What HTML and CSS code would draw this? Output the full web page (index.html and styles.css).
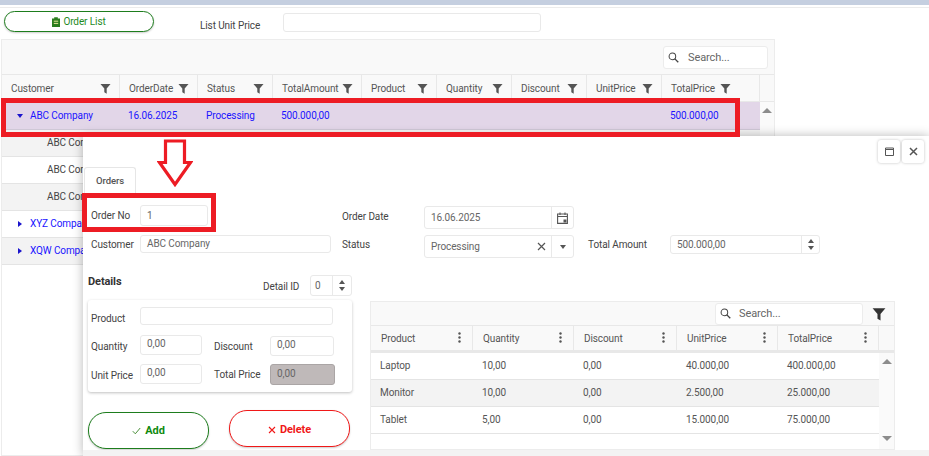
FILE: index.html
```html
<!DOCTYPE html>
<html lang="en">
<head>
<meta charset="utf-8">
<title>Orders</title>
<link rel="stylesheet" href="styles.css">
</head>
<body>
<svg class="defs" width="0" height="0" aria-hidden="true">
  <symbol id="funnel" viewBox="0 0 12 12"><path d="M.5 1h11L7.3 6v5.600L4.700 10V6z"/></symbol>
  <symbol id="lens" viewBox="0 0 12 12"><circle cx="4.800" cy="4.800" r="3.600" fill="none" stroke="currentColor" stroke-width="1.100"/><path d="M7.500 7.500l3.700 3.700" stroke="currentColor" stroke-width="1.500" fill="none"/></symbol>
  <symbol id="dots" viewBox="0 0 3 11"><circle cx="1.500" cy="1.500" r="1.200"/><circle cx="1.500" cy="5.500" r="1.200"/><circle cx="1.500" cy="9.500" r="1.200"/></symbol>
</svg>
<div class="topstrip"></div>
<div class="toolbar">
  <button class="btn-list"><svg class="clip" viewBox="0 0 8 10" width="8" height="10"><path d="M0 1.500h2.200V.3h3.600v1.200H8V10H0z" fill="#2b7d1e"/><path d="M1.800 4.200h4.400M1.800 6.400h4.400" stroke="#e8e59a" stroke-width="1"/></svg>Order List</button>
  <span class="list-label">List Unit Price</span>
  <div class="field list-input"></div>
</div>
<section class="grid">
  <div class="grid-tools">
    <div class="search main-search"><svg class="lens"><use href="#lens"/></svg><span>Search...</span></div>
  </div>
  <div class="grid-head cols">
    <div class="hc"><span>Customer</span><svg class="fn"><use href="#funnel"/></svg></div>
    <div class="hc"><span>OrderDate</span><svg class="fn"><use href="#funnel"/></svg></div>
    <div class="hc"><span>Status</span><svg class="fn"><use href="#funnel"/></svg></div>
    <div class="hc"><span>TotalAmount</span><svg class="fn"><use href="#funnel"/></svg></div>
    <div class="hc"><span>Product</span><svg class="fn"><use href="#funnel"/></svg></div>
    <div class="hc"><span>Quantity</span><svg class="fn"><use href="#funnel"/></svg></div>
    <div class="hc"><span>Discount</span><svg class="fn"><use href="#funnel"/></svg></div>
    <div class="hc"><span>UnitPrice</span><svg class="fn"><use href="#funnel"/></svg></div>
    <div class="hc hc-last"><span>TotalPrice</span><svg class="fn"><use href="#funnel"/></svg></div>
    <div class="hc"></div>
  </div>
  <div class="grid-body">
    <div class="rows">
      <div class="row row-open">
        <div class="cell cell-cust"><i class="caret-d"></i>ABC Company</div>
        <div class="cell">16.06.2025</div><div class="cell">Processing</div><div class="cell">500.000,00</div>
        <div class="cell"></div><div class="cell"></div><div class="cell"></div><div class="cell"></div><div class="cell">500.000,00</div>
      </div>
      <div class="row row-child alt">ABC Company</div>
      <div class="row row-child">ABC Company</div>
      <div class="row row-child alt">ABC Company</div>
      <div class="row row-group"><i class="caret-r"></i>XYZ Company</div>
      <div class="row row-group alt"><i class="caret-r"></i>XQW Company</div>
    </div>
    <div class="scroll"><i class="tri-up"></i></div>
  </div>
</section>

<section class="modal">
  <div class="win-bar">
    <button class="win-btn"><svg viewBox="0 0 9 9" width="9" height="9"><path d="M.5 2.500h8v6h-8zM.5 1h8v1.500h-8z" fill="none" stroke="#555"/></svg></button>
    <button class="win-btn"><svg viewBox="0 0 9 9" width="9" height="9"><path d="M1 1l7 7M8 1L1 8" stroke="#555" stroke-width="1.500"/></svg></button>
  </div>
  <div class="tabs"><div class="tab">Orders</div></div>
  <div class="form">
    <label class="lb">Order No</label>
    <div class="field f-no">1</div>
    <label class="lb lb-date">Order Date</label>
    <div class="field f-date"><span class="grow">16.06.2025</span><span class="addon"><svg viewBox="0 0 11 12" width="11" height="12"><path d="M.6 2h9.800v9.400H.6zM.6 4.500h9.800M3 .5v2.500M8 .5v2.500" fill="none" stroke="#555" stroke-width="1.100"/><path d="M6.500 7.500h3v3h-3z" fill="#555"/></svg></span></div>
    <span></span><span></span>
    <label class="lb lb-cust">Customer</label>
    <div class="field f-cust">ABC Company</div>
    <label class="lb lb-status">Status</label>
    <div class="field f-status"><span class="grow">Processing</span><svg class="x" viewBox="0 0 9 9" width="9" height="9"><path d="M1 1l7 7M8 1L1 8" stroke="#555" stroke-width="1.200"/></svg><span class="addon"><i class="tri-down small"></i></span></div>
    <label class="lb lb-total">Total Amount</label>
    <div class="field f-total"><span class="grow">500.000,00</span><span class="spin"><i class="tri-up small"></i><i class="tri-down small"></i></span></div>
  </div>
  <div class="lower">
    <div class="left">
      <div class="det-head">
        <h3>Details</h3>
        <label class="lb det-lb">Detail ID</label>
        <div class="field f-id"><span class="grow">0</span><span class="spin"><i class="tri-up small"></i><i class="tri-down small"></i></span></div>
      </div>
      <div class="card">
        <label class="lb">Product</label>
        <div class="field f-prod"></div>
        <label class="lb">Quantity</label>
        <div class="field f-qty">0,00</div>
        <label class="lb lb2">Discount</label>
        <div class="field f-disc">0,00</div>
        <label class="lb lb-unit">Unit Price</label>
        <div class="field f-unit">0,00</div>
        <label class="lb lb2">Total Price</label>
        <div class="field f-off">0,00</div>
      </div>
      <div class="actions">
        <button class="act act-add"><svg viewBox="0 0 9 8" width="9" height="8"><path d="M.8 4.200l2.500 2.600L8.200 1" fill="none" stroke="#4a8f3a"/></svg>Add</button>
        <button class="act act-del"><svg viewBox="0 0 8 8" width="8" height="8"><path d="M1 1l6 6M7 1L1 7" stroke="#f01818" stroke-width="1.100"/></svg>Delete</button>
      </div>
    </div>
    <div class="sub">
      <div class="sub-tools">
        <div class="search sub-search"><svg class="lens"><use href="#lens"/></svg><span>Search...</span></div>
        <svg class="fn-big"><use href="#funnel"/></svg>
      </div>
      <div class="sub-head subcols">
        <div class="shc">Product<svg class="dt"><use href="#dots"/></svg></div>
        <div class="shc">Quantity<svg class="dt"><use href="#dots"/></svg></div>
        <div class="shc">Discount<svg class="dt"><use href="#dots"/></svg></div>
        <div class="shc">UnitPrice<svg class="dt"><use href="#dots"/></svg></div>
        <div class="shc">TotalPrice<svg class="dt"><use href="#dots"/></svg></div>
        <div class="shc shc-end"></div>
      </div>
      <div class="sub-body">
        <div class="sub-rows">
          <div class="srow subcols5"><span>Laptop</span><span>10,00</span><span>0,00</span><span>40.000,00</span><span>400.000,00</span></div>
          <div class="srow alt subcols5"><span>Monitor</span><span>10,00</span><span>0,00</span><span>2.500,00</span><span>25.000,00</span></div>
          <div class="srow subcols5"><span>Tablet</span><span>5,00</span><span>0,00</span><span>15.000,00</span><span>75.000,00</span></div>
        </div>
        <div class="scroll sub-scroll"><i class="tri-up"></i><i class="tri-down"></i></div>
      </div>
    </div>
  </div>
  <div class="modal-foot"></div>
</section>

<div class="mark mark-row"></div>
<div class="mark mark-no"></div>
<svg class="mark-arrow" viewBox="0 0 36 48" width="36" height="48"><path d="M8.500 2h19v21.500h6L18 45.500 2.500 23.500h6z" fill="#fff" stroke="#ed1c24" stroke-width="3.200"/></svg>
</body>
</html>
```
FILE: styles.css
```css
* { box-sizing: border-box; }
html, body { margin: 0; height: 456px; overflow: hidden; }
body { position: relative; background: #fff; font: 10px/1.2 Roboto, "Liberation Sans", sans-serif; letter-spacing: -.1px; color: #555; display: flex; flex-direction: column; }
.defs { position: absolute; }
button { font: inherit; letter-spacing: inherit; background: #fff; padding: 0; cursor: pointer; }
i { display: block; }

.topstrip { height: 8px; background: #fff; border-top: 5px solid #c5cfe0; border-bottom: 1px solid #ececec; flex: none; }
.toolbar { display: flex; align-items: flex-start; height: 31px; flex: none; padding: 3px 0 0 4px; }
.btn-list { width: 150px; height: 21px; border: 1px solid #1d7d1d; border-radius: 11px; color: #1e8a1e; display: flex; align-items: center; justify-content: center; gap: 3px; box-shadow: 0 1px 2px rgba(0,0,0,.2); }
.list-label { margin: 9px 0 0 46px; color: #444; width: 83px; }
.list-input { width: 258px; height: 19px; margin-top: 2px; }

.field { border: 1px solid #e9e9e9; border-radius: 3px; background: #fff; display: flex; align-items: center; padding-left: 6px; color: #666; min-height: 0; }
.grow { flex: 1; }
.addon { width: 22px; align-self: stretch; display: flex; align-items: center; justify-content: center; border-left: 1px solid #e9e9e9; }
.spin { width: 18px; align-self: stretch; display: flex; flex-direction: column; align-items: center; justify-content: center; gap: 3px; border-left: 1px solid #e9e9e9; }

.grid { width: 774px; margin-left: 1px; flex: 1; border: 1px solid #ececec; display: flex; flex-direction: column; min-height: 0; }
.grid-tools { height: 35px; background: #f9f9f9; flex: none; padding: 6px 6px 0 0; display: flex; justify-content: flex-end; border-bottom: 1px solid #e8e8e8; }
.search { background: #fff; border: 1px solid #ececec; border-radius: 3px; display: flex; align-items: center; color: #666; font-size: 11px; }
.main-search { width: 105px; height: 23px; padding-left: 4px; }
.lens { width: 11px; height: 11px; color: #444; margin-right: 9px; }
.cols { display: grid; grid-template-columns: 118px 78px 75px 89px 75px 75px 75px 75px 98px 1fr; }
.grid-head { height: 27px; background: #f9f9f9; flex: none; border-bottom: 1px solid #e8e8e8; }
.hc { display: flex; align-items: center; justify-content: space-between; padding: 1px 8px 0 9px; border-right: 1px solid #e8e8e8; color: #555; }
.hc:last-child { border-right: 0; }
.hc-last { padding-right: 28px; }
.fn { width: 11px; height: 11px; fill: #555; flex: none; }
.grid-body { flex: 1; display: flex; min-height: 0; }
.rows { width: 758px; }
.row { height: 27px; display: flex; align-items: center; border-bottom: 1px solid #e4e4e4; }
.alt { background: #f3f3f3; }
.row-open { display: grid; grid-template-columns: 118px 78px 75px 89px 75px 75px 75px 75px 98px; height: 28px; background: #e2d6e8; border-bottom: 1px solid #cfc8d6; color: #1a14ff; align-items: center; }
.cell { padding-left: 8px; }
.cell-cust { padding-left: 15px; display: flex; align-items: center; }
.caret-d { border: 3.5px solid transparent; border-top: 4px solid #1a14cc; border-bottom: 0; margin-right: 7px; }
.caret-r { border: 3.5px solid transparent; border-left: 4px solid #1a14cc; border-right: 0; margin-right: 8px; }
.row-child { padding-left: 45px; color: #444; }
.row-group { padding-left: 16px; color: #1a14ff; }
.scroll { flex: 1; background: #fafafa; display: flex; flex-direction: column; align-items: center; justify-content: space-between; padding: 6px 0 8px; }
.tri-up { border: 5px solid transparent; border-top: 0; border-bottom: 5px solid #8c8c8c; }
.tri-down { border: 5px solid transparent; border-bottom: 0; border-top: 5px solid #8c8c8c; }
.tri-up.small { border-width: 0 3px 4px; border-color: transparent transparent #555; }
.tri-down.small { border-width: 4px 3px 0; border-color: #555 transparent transparent; }

.modal { position: absolute; left: 83px; top: 136px; right: 0; bottom: 0; background: #fff; box-shadow: 0 0 10px rgba(0,0,0,.28); display: flex; flex-direction: column; }
.win-bar { height: 31px; display: flex; justify-content: flex-end; gap: 2px; padding: 4px 5px 0 0; flex: none; }
.win-btn { width: 22px; height: 23px; border: 0; border-radius: 3px; background: #fff; box-shadow: 0 0 3px rgba(0,0,0,.25); display: flex; align-items: center; justify-content: center; }
.tabs { flex: none; height: 26px; padding-left: 1px; }
.tab { width: 52px; height: 26px; border: 1px solid #e6e6e6; border-bottom: 0; border-radius: 3px 3px 0 0; display: flex; align-items: center; justify-content: center; font-weight: 500; color: #555; font-size: 9.5px; }

.form { flex: none; display: grid; grid-template-columns: 49px 191px 93px 150px 96px 150px; grid-template-rows: 24px 23px; row-gap: 6px; padding: 12px 0 0 8px; align-items: start; height: 82px; }
.lb { color: #444; padding-top: 5px; }
.lb-date { margin-left: 11px; padding-top: 6px; }
.lb-status { margin-left: 11px; padding-top: 4px; }
.lb-cust { padding-top: 4px; }
.lb-total { margin-left: 14px; padding-top: 4px; }
.f-no { width: 68px; height: 21px; }
.f-date { height: 23px; margin-top: 1px; }
.f-cust { height: 18px; }
.f-status { height: 23px; }
.f-total { height: 19px; }
.x { margin-right: 5px; }

.lower { flex: none; display: flex; height: 175px; padding-left: 5px; }
.left { width: 264px; }
.det-head { display: flex; align-items: flex-start; height: 25px; }
.det-head h3 { margin: 0; font-size: 11px; font-weight: 700; color: #333; width: 175px; }
.det-lb { width: 47px; padding-top: 6px; }
.f-id { width: 42px; height: 21px; padding-left: 4px; }
.f-id .spin { width: 19px; }
.card { display: grid; grid-template-columns: 49px 62px 12px 56px 65px; grid-auto-rows: 20px; row-gap: 8px; height: 92px; padding: 7px 0 0 3px; border-radius: 3px; box-shadow: 0 1px 3px rgba(0,0,0,.25); align-items: start; }
.card .lb { padding-top: 6px; }
.card .field { height: 20px; padding-bottom: 2px; }
.card .lb2 { grid-column: 4; }
.f-prod { grid-column: 2 / 6; width: 193px; height: 18px !important; }
.f-qty { grid-column: 2; }
.f-disc { margin-top: 1px; width: 64px; }
.card .lb-unit { padding-top: 7px; }
.f-unit { grid-column: 2; margin-top: 1px; }
.f-off { background: #bfb9b9 !important; border-color: #aaa5a5; height: 21px !important; color: #666; margin-top: 1px; }
.actions { display: flex; gap: 20px; padding-top: 18px; align-items: flex-start; }
.act { width: 121px; height: 37px; border-radius: 18px; font-size: 11px; font-weight: 700; display: flex; align-items: center; justify-content: center; gap: 4px; box-shadow: 0 1px 2px rgba(0,0,0,.2); }
.act-add { border: 1px solid #1d7d1d; color: #0f8a0f; margin-top: 2px; }
.act-del { border: 1px solid #f01818; color: #f01818; padding-top: 2px; }

.sub { width: 525px; margin: 26px 0 0 18px; height: 149px; border: 1px solid #ececec; display: flex; flex-direction: column; }
.sub-tools { height: 24px; flex: none; background: #f9f9f9; display: flex; align-items: center; justify-content: flex-end; border-bottom: 1px solid #e8e8e8; }
.sub-search { width: 148px; height: 22px; padding-left: 4px; margin-right: 9px; }
.sub-search .lens { margin-right: 8px; }
.fn-big { width: 14px; height: 14px; fill: #333; margin-right: 8px; }
.subcols { display: grid; grid-template-columns: 102px 101px 103px 101px 101px 1fr; }
.subcols5 { display: grid; grid-template-columns: 102px 101px 103px 101px 101px; }
.sub-head { height: 27px; flex: none; background: #f9f9f9; border-bottom: 3px solid #e8e8e8; }
.shc { display: flex; align-items: center; justify-content: space-between; padding: 1px 11px 0 10px; border-right: 1px solid #e8e8e8; color: #555; }
.shc-end { border-right: 0; }
.dt { width: 3px; height: 11px; fill: #555; margin-top: -2px; }
.sub-body { flex: 1; display: flex; min-height: 0; }
.sub-rows { width: 508px; }
.srow { height: 27px; align-items: center; border-bottom: 1px solid #e4e4e4; }
.srow span { padding-left: 9px; }
.sub-scroll { padding: 6px 0 8px; }
.modal-foot { flex: 1; background: #f3f3f3; }

.mark { position: absolute; border: 5px solid #ed1c24; }
.mark-row { left: 1px; top: 98px; width: 739px; height: 39px; }
.mark-no { left: 82px; top: 193px; width: 134px; height: 39px; }
.mark-arrow { position: absolute; left: 157px; top: 139px; }
```
